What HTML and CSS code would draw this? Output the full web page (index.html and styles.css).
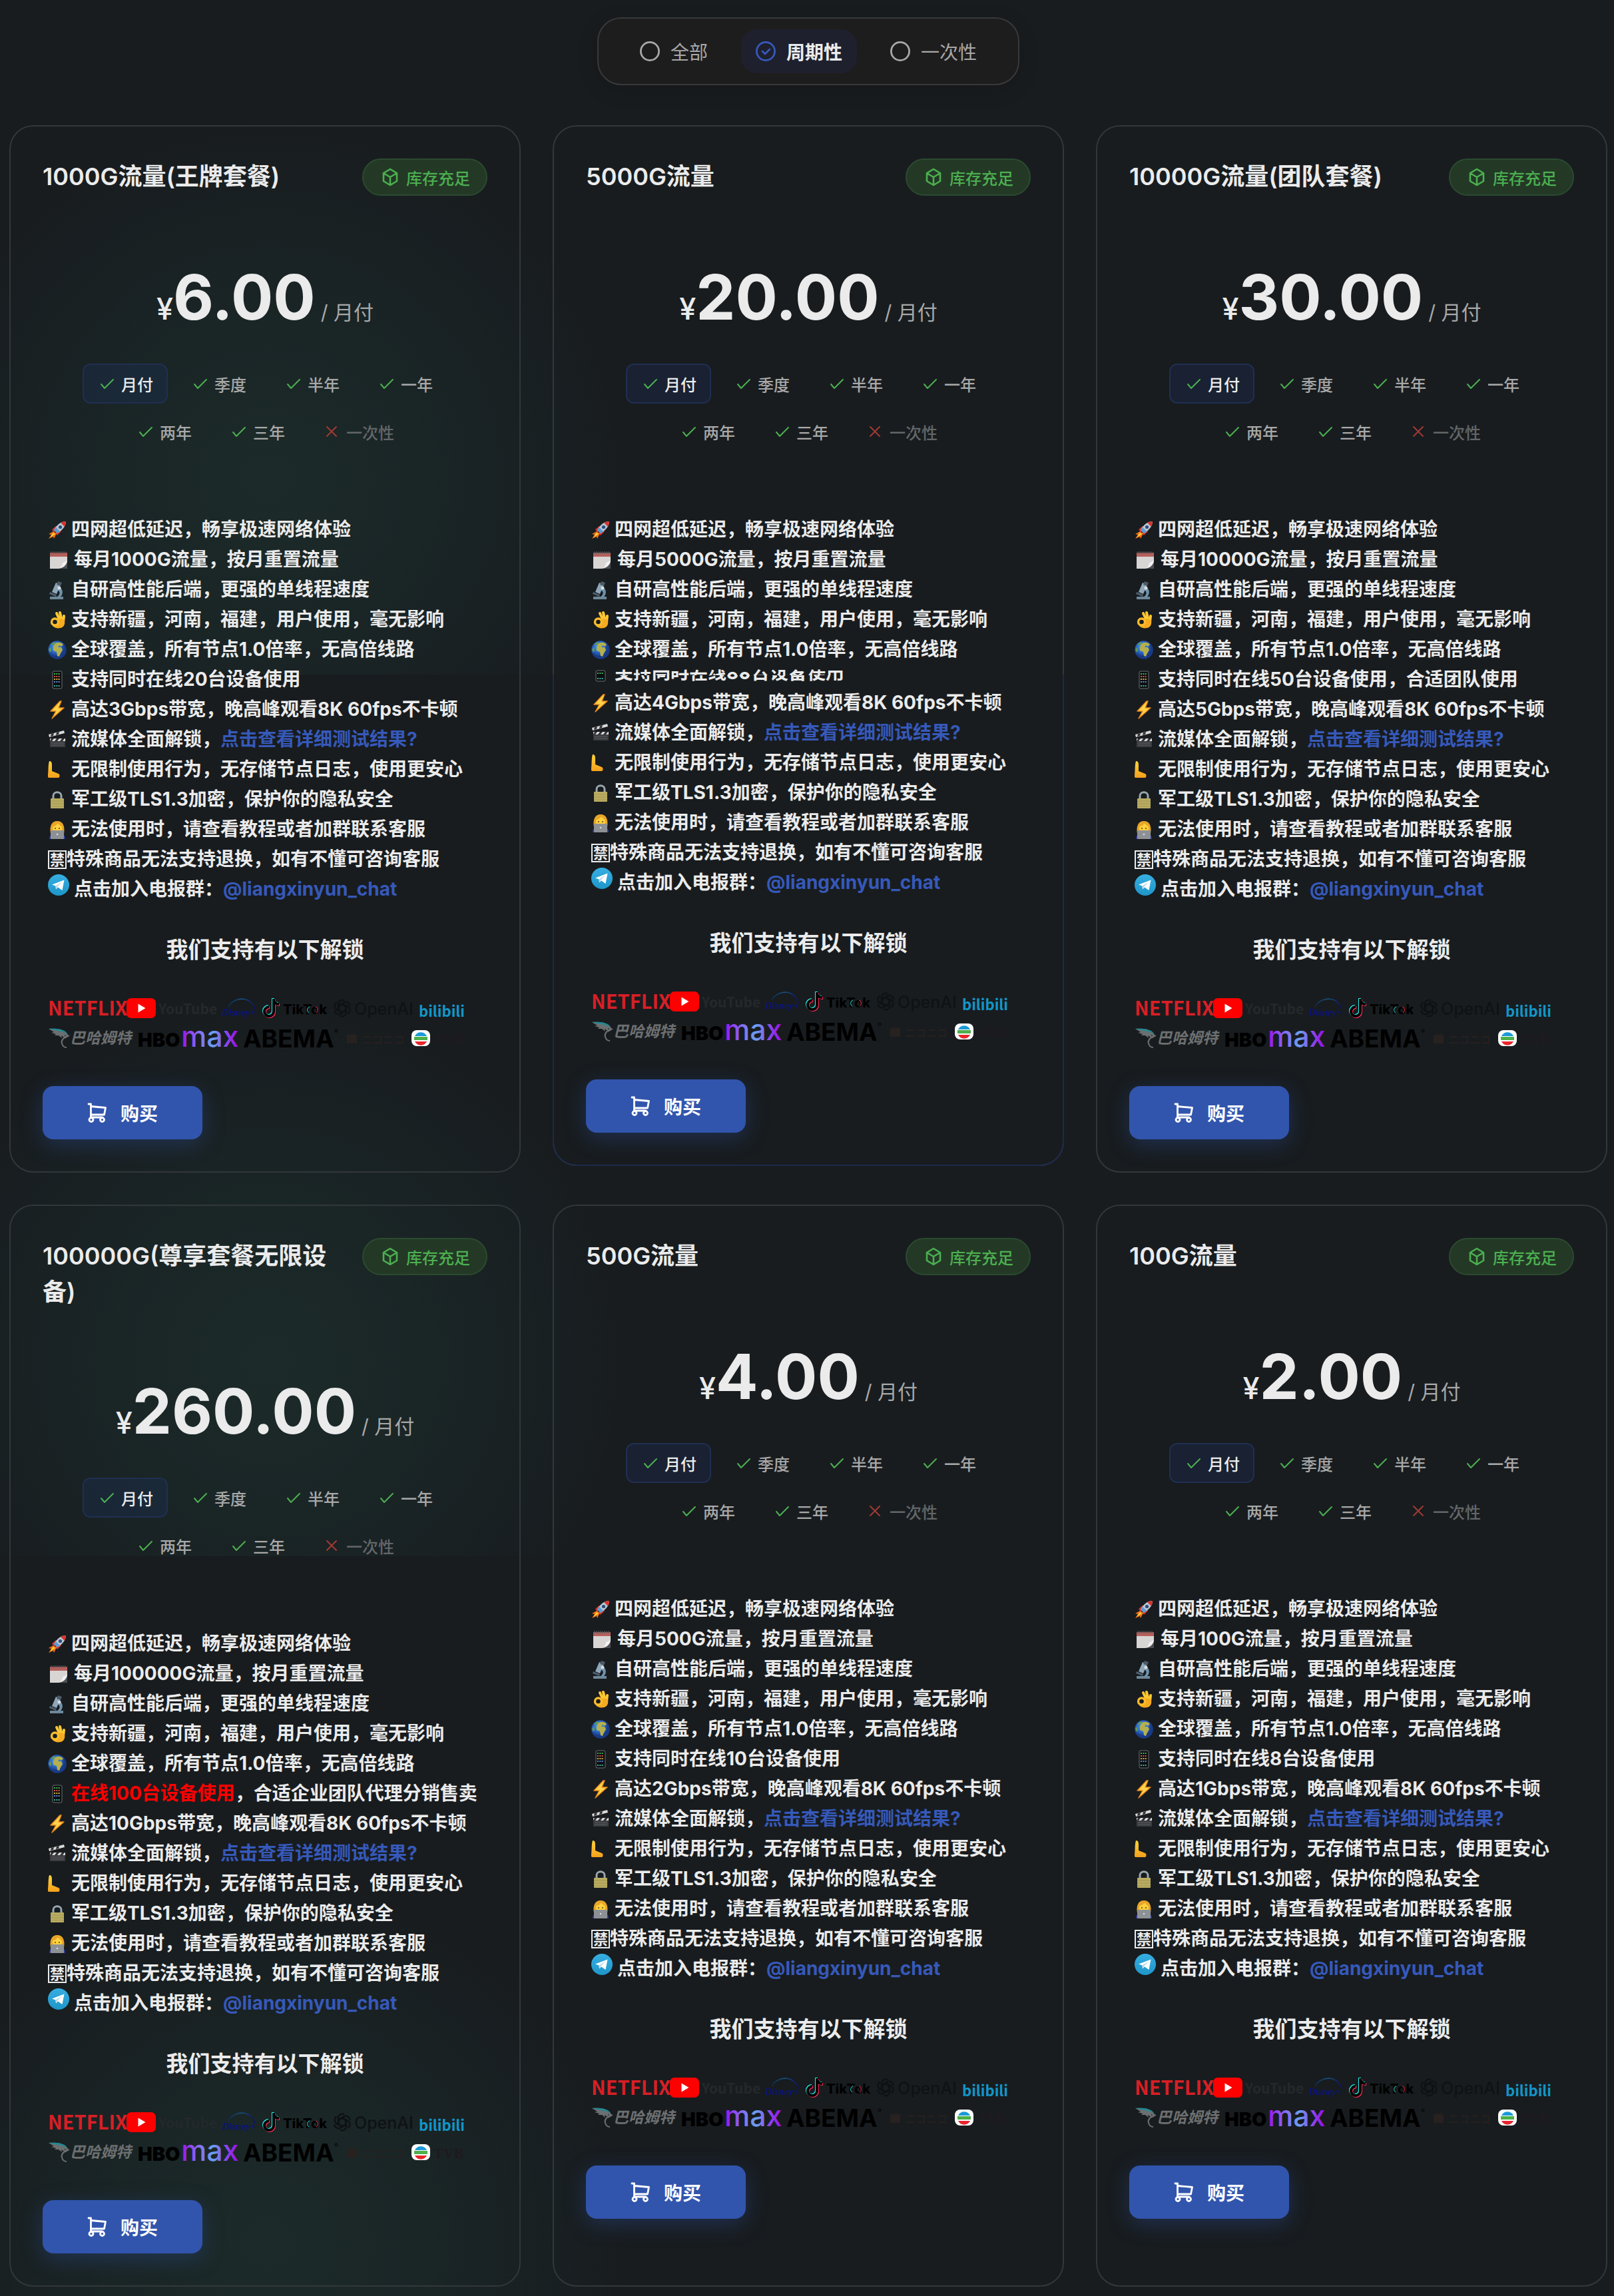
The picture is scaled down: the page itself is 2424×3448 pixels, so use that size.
FILE: index.html
```html
<!DOCTYPE html>
<html lang="zh-CN">
<head>
<meta charset="utf-8">
<meta name="viewport" content="width=device-width, initial-scale=1">
<title>套餐购买</title>
<link rel="stylesheet" href="styles.css">
</head>
<body>
<svg class="sprite" aria-hidden="true">
  <defs>
    <linearGradient id="g-max"><stop offset="0" stop-color="#9a10f0"/><stop offset=".25" stop-color="#8a60f0"/><stop offset=".55" stop-color="#6aa0ee"/><stop offset=".75" stop-color="#8a50ee"/><stop offset="1" stop-color="#9a08e6"/></linearGradient>
    <linearGradient id="g-arc"><stop offset="0" stop-color="#0c2c50"/><stop offset=".5" stop-color="#1a5078"/><stop offset="1" stop-color="#0a1068"/></linearGradient>
    <linearGradient id="g-hand" x2="0" y2="1"><stop offset="0" stop-color="#ffd43a"/><stop offset="1" stop-color="#f3a01c"/></linearGradient>
    <linearGradient id="g-tg" x2="0" y2="1"><stop offset="0" stop-color="#37aee2"/><stop offset="1" stop-color="#1e96c8"/></linearGradient>
    <radialGradient id="g-sea" cx=".4" cy=".35"><stop offset="0" stop-color="#5aa9e8"/><stop offset=".6" stop-color="#2a66c4"/><stop offset="1" stop-color="#183a86"/></radialGradient>
  </defs>
  <symbol id="check" viewBox="0 0 24 24"><path d="M4 13l5 6L22 6" fill="none" stroke="currentColor" stroke-width="2" stroke-linecap="round" stroke-linejoin="round"/></symbol>
  <symbol id="cross" viewBox="0 0 24 24"><path d="M5 5l14 14M19 5L5 19" fill="none" stroke="currentColor" stroke-width="2" stroke-linecap="round"/></symbol>
  <symbol id="ring" viewBox="0 0 30 30"><circle cx="15" cy="15" r="13.6" fill="none" stroke="currentColor" stroke-width="2.8"/></symbol>
  <symbol id="ring-check" viewBox="0 0 30 30"><circle cx="15" cy="15" r="13.6" fill="none" stroke="currentColor" stroke-width="2.8"/><path d="M10 15l4 4 7-7" fill="none" stroke="currentColor" stroke-width="2.8" stroke-linecap="round" stroke-linejoin="round"/></symbol>
  <symbol id="box" viewBox="0 0 24 28"><path d="M12 2l10 6v12l-10 6L2 20V8zM2 8l10 6 10-6M12 14v12" fill="none" stroke="currentColor" stroke-width="2.6" stroke-linejoin="round"/></symbol>
  <symbol id="cart" viewBox="0 0 30 30"><g fill="none" stroke="currentColor" stroke-width="2.8" stroke-linecap="round" stroke-linejoin="round"><circle cx="6" cy="25.500" r="3"/><circle cx="22.500" cy="25.500" r="3"/><path d="M2 2h3.500v20h17M5.500 5.500l22 2-2 10.500h-20"/></g></symbol>

  <symbol id="e-rocket" viewBox="0 0 28 28"><path d="M6 13l6-5 4 2-7 8zM14 22l6-6-2-4-7 7z" fill="#d0322a"/><path d="M27 1c-7 0-13 4-18 13l5 5C22 14 27 8 27 1z" fill="#b9c6d2"/><path d="M27 1c-3 0-6 1-8 2l6 6c1-2 2-5 2-8z" fill="#d8342c"/><path d="M9 14l5 5 4-3-6-6z" fill="#5a9ad4"/><circle cx="18.500" cy="9.500" r="2.600" fill="#2d4f7c"/><path d="M8 16L1 20l4 1-4 6 7-3 1 3 4-8z" fill="#f2701a"/><path d="M8 18l-5 7 8-5z" fill="#ffd83a"/></symbol>
  <symbol id="e-calendar" viewBox="0 0 32 28"><path d="M3 3h26v24H3z" fill="#d8d6d4"/><path d="M3 3h26v6H3z" fill="#b5605c"/><path d="M5 1v4M8 1v4M11 1v4M14 1v4M17 1v4M20 1v4M23 1v4M26 1v4" stroke="#55585c" stroke-width="1.200"/><path d="M29 16v11H16c7-1 12-5 13-11z" fill="#4b4e52"/><path d="M29 14c-2 3-6 3-7 5s-1 5-5 7c7-1 11-6 12-12z" fill="#f3f2f0"/></symbol>
  <symbol id="e-scope" viewBox="0 0 28 28"><path d="M3 24h20v4H3z" fill="#6d8798"/><path d="M15 9c8 2 9 11 3 16h-5c6-4 6-9 1-11z" fill="#6f93ac"/><path d="M12 3l7 3-6 14-7-3z" fill="#8ea6b8"/><path d="M15 1l6 2-2 5-6-2z" fill="#4c5a68"/><circle cx="17" cy="11" r="2.500" fill="#d7dde2"/><path d="M3 17l10 4-1 3-10-4z" fill="#4d6070"/></symbol>
  <symbol id="e-ok" viewBox="0 0 28 28"><path d="M19 17L13 4M21 16L18 3M23 17L24 8" stroke="#ffc832" stroke-width="4" stroke-linecap="round"/><path d="M14 14c4-3 9-2 11 1 1 5-1 10-6 11-5 1-9 0-12-3l6-2c3-1 3-5 1-7z" fill="#f5ab20"/><circle cx="10.500" cy="17" r="5" fill="none" stroke="#fbbc2a" stroke-width="3.400"/></symbol>
  <symbol id="e-globe" viewBox="0 0 28 28"><circle cx="14" cy="14" r="13.800" fill="url(#g-sea)"/><path d="M10 5c4-3 10-3 13 1l-3 3-3-2-2 3h5l2 4-3 5-2 5-3-1-1-6-5-2 0-5z" fill="#b4b04e"/><path d="M4 6l5-4 2 1-3 4zM1 13l3-3 1 5-2 3z" fill="#5f9a56"/></symbol>
  <symbol id="e-phone" viewBox="0 0 28 28"><rect x="7" y="1" width="14" height="26" rx="2" fill="#0c0e10" stroke="#6c7074"/><g stroke-width="2" stroke-dasharray="2 1.300"><path d="M9 5h10" stroke="#48b058"/><path d="M9 9h10" stroke="#d0554a"/><path d="M9 13h10" stroke="#d8b048"/><path d="M9 17h10" stroke="#5a86d0"/><path d="M9 23h10" stroke="#3fae9a"/></g></symbol>
  <symbol id="e-bolt" viewBox="0 0 28 28"><path d="M18 1L4 16h8L6 27 24 11h-8l4-10z" fill="#ffd24a" stroke="#e8891a" stroke-width="1.400" stroke-linejoin="round"/></symbol>
  <symbol id="e-clap" viewBox="0 0 28 28"><path d="M3 12h23v13H3z" fill="#3a3c3f"/><path d="M3 12h23v4H3zM1 6l23-6 1 4L2 10z" fill="#d9d9d9"/><path d="M5 12h4l-3 4H3zM13 12h4l-3 4h-4zM21 12h4l-3 4h-4zM5 5l4-1-1 4-4 1zM13 3l4-1-1 4-4 1z" fill="#303235"/><path d="M5 19h19M5 22h19" stroke="#5a5c60"/></symbol>
  <symbol id="e-leg" viewBox="0 0 28 28"><path d="M2 1c3 0 4 2 4 6v9l10 4c2 1 2 5 0 6H2c-2 0-3-2-2-5 1-6 0-13 2-20z" fill="url(#g-hand)"/></symbol>
  <symbol id="e-lock" viewBox="0 0 28 28"><path d="M8 13V8c0-7 12-7 12 0v5" fill="none" stroke="#9aa7b0" stroke-width="3"/><rect x="4" y="12" width="20" height="15" rx="1" fill="#b9ac62"/><path d="M4 16h20M4 20h20M4 24h20" stroke="#a39650"/></symbol>
  <symbol id="e-coder" viewBox="0 0 28 28"><path d="M2 28c0-7 4-9 12-9s12 2 12 9z" fill="#2f3a9c"/><path d="M4 20C2 8 6 1 14 1s12 7 10 19l-4-4H8z" fill="#e8a62a"/><circle cx="14" cy="12" r="7" fill="#ffd23c"/><path d="M6 9c5 0 7-2 9-5 2 3 4 5 7 5 0-10-16-10-16 0z" fill="#e8a62a"/><circle cx="11" cy="12" r="1" fill="#573a12"/><circle cx="17" cy="12" r="1" fill="#573a12"/><rect x="4" y="15" width="20" height="13" rx="1" fill="#8d9196"/><circle cx="14" cy="21" r="1.200" fill="#dfe2e5"/></symbol>
  <symbol id="e-telegram" viewBox="0 0 32 32"><circle cx="16" cy="16" r="16" fill="url(#g-tg)"/><path d="M6 15.500L24.500 8.500 21.500 24 15 19.500 12 22.500 11.500 17.500z" fill="#fff"/><path d="M11.500 17.500L21.500 11 14.500 18.500 12 22.500z" fill="#b9d9ea"/></symbol>
  <symbol id="knot" viewBox="0 0 28 30"><g fill="none" stroke="#0f1214" stroke-width="2.400"><path id="petal" d="M14 9l6 3.500v8.500a6 6 0 0 1-9 5.500"/><use href="#petal" transform="rotate(60 14 15)"/><use href="#petal" transform="rotate(120 14 15)"/><use href="#petal" transform="rotate(180 14 15)"/><use href="#petal" transform="rotate(240 14 15)"/><use href="#petal" transform="rotate(300 14 15)"/></g></symbol>
</svg>

<main class="page">
  <form class="filters" aria-label="套餐类型">
    <label class="filter"><input type="radio" name="kind"><svg class="filter-icon"><use href="#ring"/></svg>全部</label>
    <label class="filter"><input type="radio" name="kind" checked><svg class="filter-icon"><use href="#ring-check"/></svg>周期性</label>
    <label class="filter"><input type="radio" name="kind"><svg class="filter-icon"><use href="#ring"/></svg>一次性</label>
  </form>
  <section class="plans" id="plans"></section>
</main>
<script src="app.js"></script>
</body>
</html>
```
FILE: app.js
```js
const plans = [
  { title: '1000G流量(王牌套餐)', price: '6.00', traffic: '1000G', speed: 3, devices: '支持同时在线20台设备使用' },
  { title: '5000G流量', price: '20.00', traffic: '5000G', speed: 4, devices: '支持同时在线30台设备使用', seam: true },
  { title: '10000G流量(团队套餐)', price: '30.00', traffic: '10000G', speed: 5, devices: '支持同时在线50台设备使用，合适团队使用' },
  { title: '100000G(尊享套餐无限设备)', price: '260.00', traffic: '100000G', speed: 10, devices: '<em>在线100台设备使用</em>，合适企业团队代理分销售卖' },
  { title: '500G流量', price: '4.00', traffic: '500G', speed: 2, devices: '支持同时在线10台设备使用' },
  { title: '100G流量', price: '2.00', traffic: '100G', speed: 1, devices: '支持同时在线8台设备使用' }
];
const periods = ['月付', '季度', '半年', '一年', '两年', '三年', '一次性'];

// Streaming service logos: [width, drawing], all 30px tall
const note = 'M16 1v19a7 7 0 1 1-7-7M16 3c1 4 4 6 8 6';
const logos = [
  [
    [111, '<text x="0" y="26" class="t-slim" font-size="29" fill="#d81f26">NETFLIX</text>'],
    [135, '<rect width="44" height="30" rx="7" fill="#f00"/><path d="M17.500 8.500v13l11-6.500z" fill="#fff"/><text x="48" y="24" class="t-slim" font-size="21" fill="#24282a">YouTube</text>'],
    [56, '<path d="M11 13C19-3 46-4 51 17" fill="none" stroke="url(#g-arc)" stroke-width="1.600"/><text x="1" y="26" class="t-serif" font-style="italic" font-size="15" fill="#0a1478">Disney+</text>'],
    [98, `<g fill="none" stroke-width="4"><path d="${note}" stroke="#fe2c55" transform="translate(1 1)"/><path d="${note}" stroke="#25f4ee" transform="translate(-1 -1)"/><path d="${note}" stroke="#000"/></g><text x="30" y="24" class="t-sans" font-weight="800" font-size="20" fill="#000">TikTok</text><path d="M70 13a5 5 0 0 0-1 9" fill="none" stroke="#25a8a4" stroke-width="1.200"/><path d="M79 13a5 5 0 0 1 1 9" fill="none" stroke="#c02a48" stroke-width="1.200"/>`],
    [122, '<use href="#knot" width="28" height="30"/><text x="32" y="25" class="t-sans" font-weight="500" font-size="25" fill="#0f1214">OpenAI</text>'],
    [66, '<text x="0" y="28" class="t-slim" font-size="22" fill="#1296c8">bilibili</text>']
  ],
  [
    [128, '<path d="M1 1c10-1 20 0 25 4 3 2 4 5 4 7l-5-2 1 5-6-4 1 4-5-4-6 0 2-2-7-2 4-1z" fill="#6c6f70"/><path d="M1 1c10-1 20 0 25 4l3 4C20 3 10 4 1 1z" fill="#1f8a92"/><path d="M30 10c-6 4-11 8-9 13 1 4 4 6 7 6M25 15l7-4" fill="none" stroke="#6c6f70" stroke-width="2"/><text x="33" y="23" class="t-slim" font-style="italic" font-size="23" fill="#6c6f70">巴哈姆特</text>'],
    [150, '<text x="0" y="28" class="t-sans" font-weight="900" font-size="29" fill="#000">HBO</text><text x="65" y="28" class="t-sans" font-weight="500" font-size="43" fill="url(#g-max)">max</text>'],
    [148, '<text x="1" y="29" class="t-sans" font-weight="700" font-size="37" fill="#000">ABEMA</text><circle cx="141" cy="4" r="2" fill="none" stroke="#000"/>'],
    [92, '<path d="M2 10h6l-3-4 5 4 5-4-3 4h5v13H2z" fill="#27211f"/><text x="24" y="23" font-weight="500" font-size="16" fill="#27211f">ニコニコ</text>'],
    [80, '<rect y="3" width="28" height="24" rx="8" fill="#fff"/><path d="M5 12a10 10 0 0 1 18 0z" fill="#1a9ad8"/><path d="M4 13h20v5H4z" fill="#4db04a"/><path d="M5 20h18a10 10 0 0 1-18 0z" fill="#e8252a"/><text x="33" y="24" class="t-serif" font-size="22" fill="#1f1a1d">TVB</text>']
  ]
];

const icon = (id, cls) => `<svg class="${cls}" aria-hidden="true"><use href="#${id}"/></svg>`;
const row = (id, text) => `<li>${icon('e-' + id, 'emoji emoji-' + id)}${text}</li>`;
const logo = ([width, art]) => `<svg width="${width}" height="30" viewBox="0 0 ${width} 30">${art}</svg>`;

const period = (name, i, plan) => {
  const off = i === periods.length - 1;
  return `<label class="period"><input type="radio" name="period-${plan}" ${i ? '' : 'checked'} ${off ? 'disabled' : ''}>${icon(off ? 'cross' : 'check', 'period-icon')}${name}</label>`;
};

const deviceRow = p => {
  if (!p.seam) return row('phone', p.devices);
  const line = icon('e-phone', 'emoji') + p.devices;
  return `<li class="split"><div class="slice">${line}</div><div class="slice slice-end" aria-hidden="true">${line}</div></li>`;
};

const card = (p, n) => `
<article class="plan ${p.seam ? 'plan-hover' : ''}">
  <header class="plan-head"><h2>${p.title}</h2><span class="stock">${icon('box', 'stock-icon')}库存充足</span></header>
  <p class="price"><span class="currency">¥</span><strong>${p.price}</strong><span class="unit">/ 月付</span></p>
  <div class="periods">${periods.map((name, i) => period(name, i, n)).join('')}</div>
  <ul class="features">
    ${row('rocket', '四网超低延迟，畅享极速网络体验')}
    ${row('calendar', `每月${p.traffic}流量，按月重置流量`)}
    ${row('scope', '自研高性能后端，更强的单线程速度')}
    ${row('ok', '支持新疆，河南，福建，用户使用，毫无影响')}
    ${row('globe', '全球覆盖，所有节点1.0倍率，无高倍线路')}
    ${deviceRow(p)}
    ${row('bolt', `高达${p.speed}Gbps带宽，晚高峰观看8K 60fps不卡顿`)}
    ${row('clap', '流媒体全面解锁，<a href="#test">点击查看详细测试结果?</a>')}
    ${row('leg', '无限制使用行为，无存储节点日志，使用更安心')}
    ${row('lock', '军工级TLS1.3加密，保护你的隐私安全')}
    ${row('coder', '无法使用时，请查看教程或者加群联系客服')}
    <li><span class="forbid">禁</span>特殊商品无法支持退换，如有不懂可咨询客服</li>
    ${row('telegram', '点击加入电报群：<a href="#chat">@liangxinyun_chat</a>')}
  </ul>
  <h3>我们支持有以下解锁</h3>
  <div class="logos">${logos.map(r => `<div class="logo-row">${r.map(logo).join('')}</div>`).join('')}</div>
  <button class="buy" type="button">${icon('cart', 'buy-icon')}购买</button>
</article>`;

document.getElementById('plans').innerHTML = plans.map(card).join('');
```
FILE: styles.css
```css
* { box-sizing: border-box; margin: 0; padding: 0; }

body {
  background-color: #181c1f;
  background-image: radial-gradient(circle 540px at 404px 1030px, #1c2b29 0, #1a2526 45%, #181c1f 100%);
  background-size: 100% 1324px;
  background-position: 0 -311px;
  color: #ebebeb;
  font-family: Inter, "Noto Sans CJK SC", sans-serif;
  font-size: 28px;
}

a { color: #3659ba; text-decoration: none; }
ul { list-style: none; }
svg { flex: none; display: block; overflow: visible; }
.sprite { position: absolute; width: 0; height: 0; }

.page { padding: 26px 10px 15px 14px; }

/* type filter */
.filters {
  display: flex;
  gap: 28px;
  width: fit-content;
  margin: 0 auto 60px;
  padding: 16px 40px;
  border: 2px solid #393939;
  border-radius: 36px;
  background: #1e1d1d;
  box-shadow: 0 8px 32px rgba(0, 0, 0, .12);
}
.filter {
  position: relative;
  display: flex;
  align-items: center;
  gap: 16px;
  height: 66px;
  padding: 0 22px;
  border-radius: 24px;
  color: #a8a8a8;
}
.filter input, .period input { position: absolute; inset: 0; opacity: 0; }
.filter:has(:checked) { background: #1e202e; color: #ebebeb; font-weight: 700; }
.filter:has(:checked) .filter-icon { color: #3659ba; }
.filter-icon { width: 30px; height: 30px; }

/* plan cards */
.plans { display: grid; grid-template-columns: repeat(3, 1fr); gap: 48px; }
.plan {
  position: relative;
  padding: 48px;
  border: 2px solid #323739;
  border-radius: 36px;
}
.plan-hover { align-self: start; }
.plan-hover::after {
  content: "";
  position: absolute;
  inset: 823px -2px -2px;
  border: 2px solid #1e2a4a;
  border-top: 0;
  border-radius: 0 0 36px 36px;
  pointer-events: none;
}

.plan-head { display: flex; justify-content: space-between; align-items: flex-start; gap: 32px; }
.plan-head h2 { font-size: 36px; line-height: 54px; font-weight: 600; }
.stock {
  flex: none;
  display: flex;
  align-items: center;
  gap: 12px;
  height: 56px;
  padding: 0 24px 0 28px;
  border: 2px solid #2b4a2f;
  border-radius: 28px;
  background: #233926;
  color: #4caf50;
  font-size: 24px;
  font-weight: 500;
}
.stock-icon { width: 24px; height: 28px; }

.price {
  display: flex;
  justify-content: center;
  align-items: baseline;
  height: 116px;
  margin: 94px 0 42px;
  line-height: 116px;
}
.price strong { font-size: 94px; }
.currency { font-size: 45px; font-weight: 500; }
.unit { margin-left: 8px; color: #a8a8a8; font-size: 30px; }

.periods { display: flex; flex-wrap: wrap; justify-content: center; gap: 12px; padding: 0 48px; }
.period {
  position: relative;
  display: flex;
  align-items: center;
  gap: 10px;
  height: 60px;
  padding: 0 20px 0 22px;
  border: 2px solid transparent;
  border-radius: 12px;
  color: #a8a8a8;
  font-size: 24px;
  font-weight: 500;
}
.period:has(:checked) { border-color: #202f52; background: rgba(34, 60, 150, .16); color: #ebebeb; }
.period:has(:disabled) { color: #636668; }
.period-icon { width: 24px; height: 24px; color: #4caf50; }
.period:has(:disabled) .period-icon { color: #a13a34; }

/* feature list */
.features { margin: 95px 0 45px; padding-left: 8px; font-weight: 700; line-height: 45px; white-space: nowrap; }
.features li { display: flex; align-items: center; height: 45px; }
.features em { color: #f00; font-style: normal; }
.emoji { width: 28px; height: 28px; margin-right: 7px; }
.emoji-calendar { width: 32px; }
.emoji-telegram { width: 32px; height: 32px; margin-bottom: 14px; }
.forbid {
  display: grid;
  place-items: center;
  width: 28px;
  height: 28px;
  border: 2px solid #ebebeb;
  font-size: 22px;
  line-height: 24px;
}
.features .split { flex-direction: column; align-items: stretch; height: 35px; }
.slice { display: flex; align-items: flex-start; height: 16px; overflow: hidden; }
.slice .emoji { margin-top: 8px; }
.slice-end { height: 19px; align-items: flex-end; }
.slice-end .emoji { margin: 0 7px 9px 0; }

.plan h3 { font-size: 33px; line-height: 46px; text-align: center; }

/* streaming logos */
.logos { display: grid; gap: 15px; margin: 50px 0 57px; padding-left: 8px; }
.logo-row { display: flex; gap: 7px; }
.t-slim { font-family: "Noto Sans CJK SC", sans-serif; font-weight: 700; }
.t-sans { font-family: Inter, sans-serif; }
.t-serif { font-family: "Liberation Serif", serif; font-weight: 700; }

.buy {
  display: flex;
  justify-content: center;
  align-items: center;
  gap: 20px;
  width: 240px;
  height: 80px;
  border: 0;
  border-radius: 16px;
  background: #3155ad;
  box-shadow: 0 8px 32px rgba(49, 85, 173, .35);
  color: #fff;
  font: inherit;
  font-weight: 600;
}
.buy-icon { width: 30px; height: 30px; }
```
